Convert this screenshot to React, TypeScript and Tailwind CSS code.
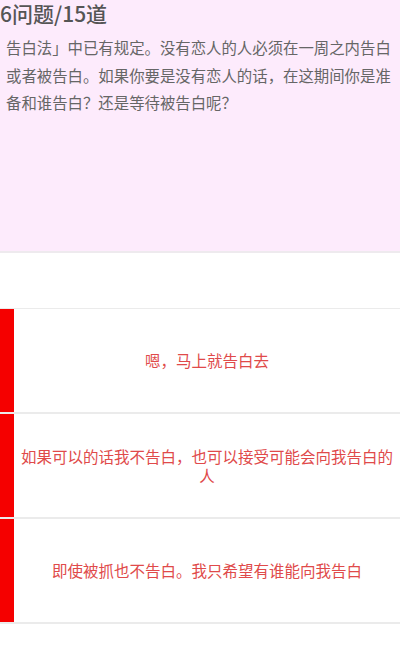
const options = [
  "嗯，马上就告白去",
  "如果可以的话我不告白，也可以接受可能会向我告白的人",
  "即使被抓也不告白。我只希望有谁能向我告白",
];

export default function App() {
  return (
    <div
      className="h-[660px] w-[400px] overflow-hidden bg-white"
      style={{ fontFamily: '"Noto Sans CJK SC", "Noto Sans", sans-serif' }}
    >
      <div className="h-[253px] border-b-2 border-[#eeeaee] bg-[#fdebfc]">
        <h1 className="text-[21px] font-medium leading-[27px] text-[#555]">6问题/15道</h1>
        <p className="mt-[7px] px-[6px] text-[15.4px] leading-[27.5px] text-[#666]">
          告白法」中已有规定。没有恋人的人必须在一周之内告白或者被告白。如果你要是没有恋人的话，在这期间你是准备和谁告白？还是等待被告白呢？
        </p>
      </div>
      <div className="h-[55px]" />
      <div className="border-t border-[#ebebeb]">
        {options.map((text) => (
          <div key={text} className="flex h-[105px] border-b-2 border-[#ebebeb]">
            <div className="w-[14px] shrink-0 bg-[#f50000]" />
            <div className="flex flex-1 items-center justify-center px-[4px] text-center text-[15.5px] leading-[19px] text-[#e04a4a]">
              {text}
            </div>
          </div>
        ))}
      </div>
    </div>
  );
}
